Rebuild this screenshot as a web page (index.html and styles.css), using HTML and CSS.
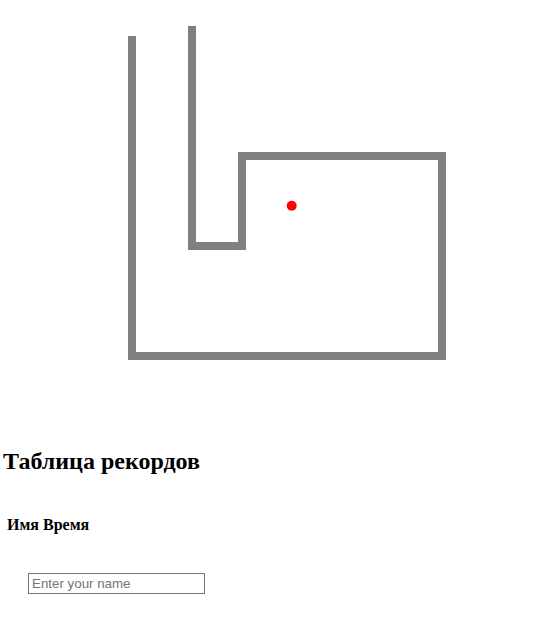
FILE: index.html
```html
<!DOCTYPE html>
<html lang="ru">
<head>
<meta charset="utf-8">
<title>Лабиринт</title>
<link rel="stylesheet" href="styles.css">
</head>
<body>
<div class="stage">
  <svg class="maze" width="542" height="420" viewBox="0 0 542 420" xmlns="http://www.w3.org/2000/svg">
    <g fill="#808080">
      <rect x="128" y="36" width="8" height="324"/>
      <rect x="128" y="352" width="318" height="8"/>
      <rect x="438" y="152" width="8" height="208"/>
      <rect x="238" y="152" width="208" height="8"/>
      <rect x="238" y="152" width="8" height="98"/>
      <rect x="188" y="242" width="58" height="8"/>
      <rect x="188" y="26" width="8" height="224"/>
    </g>
    <circle cx="291.7" cy="205.7" r="5" fill="#ff0000"/>
  </svg>
</div>
<h2 class="title">Таблица рекордов</h2>
<table class="records">
  <thead>
    <tr><th>Имя</th><th>Время</th></tr>
  </thead>
  <tbody></tbody>
</table>
<div class="form">
  <input class="name" type="text" placeholder="Enter your name">
</div>
</body>
</html>
```

FILE: styles.css
```css
html, body {
  margin: 0;
  padding: 0;
  background: #ffffff;
}
body {
  font-family: "Liberation Serif", "Times New Roman", serif;
  color: #000000;
}
.stage {
  height: 420px;
}
.maze {
  display: block;
}
.title {
  margin: 28px 0 0 3px;
  font-size: 24px;
  font-weight: bold;
}
.records {
  margin: 38px 0 0 4px;
  border-spacing: 2px;
  font-size: 16px;
}
.records th {
  padding: 1px;
  text-align: left;
}
.form {
  padding: 36px 0 0 28px;
}
.name {
  box-sizing: border-box;
  width: 177px;
  height: 21px;
  margin: 0;
  padding: 1px 3px;
  border: 1px solid #767676;
  border-radius: 0;
  font-family: "Liberation Sans", Arial, sans-serif;
  font-size: 13.33px;
  outline: none;
}
.name::placeholder {
  color: #757575;
}
```
